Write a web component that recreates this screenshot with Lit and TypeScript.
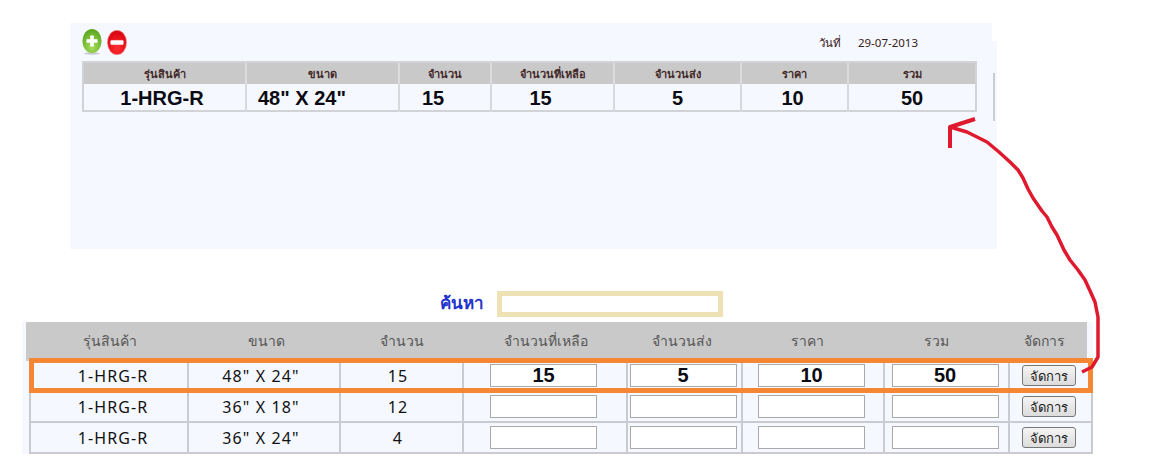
import { LitElement, html, css, svg } from "lit";
import { customElement } from "lit/decorators.js";

const TOP_HEAD = ["รุ่นสินค้า", "ขนาด", "จำนวน", "จำนวนที่เหลือ", "จำนวนส่ง", "ราคา", "รวม"];
const TOP_ROW = ["1-HRG-R", `48" X 24"`, "15", "15", "5", "10", "50"];
const LOW_HEAD = [...TOP_HEAD, "จัดการ"];
const ROWS = [
  { id: "1-HRG-R", size: `48" X 24"`, qty: "15", vals: ["15", "5", "10", "50"] },
  { id: "1-HRG-R", size: `36" X 18"`, qty: "12", vals: ["", "", "", ""] },
  { id: "1-HRG-R", size: `36" X 24"`, qty: "4", vals: ["", "", "", ""] },
];

@customElement("app-root")
export class AppRoot extends LitElement {
  static styles = css`
    :host { display: block; position: relative; width: 1174px; height: 476px; background: #fff; overflow: hidden;
      font-family: Tahoma, "Noto Sans", "DejaVu Sans", sans-serif; }
    .panel { position: relative; box-sizing: border-box; width: 927px; height: 226px; margin: 23px 0 0 70px;
      padding: 6px 20px 0 12px; background: #f5f8fe; }
    .panel::before { content: ""; position: absolute; right: 0; top: 0; width: 5px; height: 18px; background: #fff; }
    .panel::after { content: ""; position: absolute; left: 923px; top: 50px; width: 2px; height: 48px; background: #c9ccd2; }
    .tools { display: flex; height: 32px; align-items: flex-start; }
    .tools svg { display: block; margin-right: 5px; }
    .date { margin-left: auto; margin-top: 6px; display: flex; gap: 17px; padding-right: 59px; font-size: 11.5px; line-height: 16px; color: #3a2020; }
    .ttable { width: 895px; border: 2px solid #d2d3d6; box-sizing: border-box; }
    .thead, .trow { display: grid; grid-template-columns: 161px 153px 92px 123px 127px 107px 128px; }
    .thead { background: #c9c9c9; height: 21px; }
    .thead div { font-size: 11px; line-height: 21px; text-align: center; color: #43292a; font-weight: 700; border-left: 2px solid #dcdcde; }
    .thead div:first-child, .trow div:first-child { border-left: 0; }
    .trow { height: 26px; }
    .trow div { font: 700 20px/28px "Liberation Sans", Arial, sans-serif; color: #0b0b14; text-align: center; border-left: 2px solid #d8d9dc; }
    .trow div:first-child { padding-right: 5px; }
    .trow div:nth-child(6) { padding-right: 4px; }
    .trow .l { text-align: left; padding-left: 11px; }
    .trow .m { padding-right: 24px; }
    .search { display: flex; align-items: center; height: 26px; margin: 42px 0 5px 440px; }
    .search label { font-size: 17px; font-weight: 700; color: #2233cc; width: 57px; padding-bottom: 3px; }
    .search input { box-sizing: border-box; width: 226px; height: 26px; border: 5px solid #eee2b4; background: #fff; outline: 0; }
    .low { box-sizing: border-box; width: 1071px; margin-left: 22px; background: #f5f8fe; height: 132px; padding-left: 4px; }
    .lhead { display: grid; grid-template-columns: 168px 144px 128px 160px 112px 138px 120px 91px; width: 1061px; height: 39px; background: #c9c9c9; }
    .lhead div { font-size: 14px; line-height: 38px; color: #555; text-align: center; }
    .lhead div:last-child { padding-left: 5px; }
    .lrow { display: grid; grid-template-columns: 156px 152px 123px 164px 115px 142px 125px 85px; width: 1064px; height: 31px; margin-left: 3px;
      box-sizing: border-box; border-left: 2px solid #c9cbd0; border-right: 2px solid #c9cbd0; border-bottom: 2px solid #c9cbd0; }
    .lrow > div { display: flex; align-items: center; justify-content: center; border-left: 2px solid #c9cbd0; font-size: 16px; letter-spacing: 1.1px; color: #111; }
    .lrow > div:first-child { border-left: 0; padding-left: 8px; }
    .lrow > div:nth-child(2) { padding-right: 6px; }
    .lrow > div:nth-child(3) { padding-right: 7px; }
    .lrow > div:nth-child(n+4):nth-child(-n+7) { padding-right: 3px; }
    .lrow input { box-sizing: border-box; width: 107px; height: 23px; padding: 0; border: 1px solid #a9a9a9; background: #fff; text-align: center;
      font: 700 20px "Liberation Sans", Arial, sans-serif; color: #0b0b14; outline: 0; }
    .lrow button { box-sizing: border-box; width: 54px; height: 21px; padding: 0; margin-right: 5px; border: 1px solid #777; border-radius: 3px;
      background: linear-gradient(#f4f4f4, #dcdcdc); font-size: 13px; letter-spacing: 0; color: #222; font-family: inherit; }
    .hl { position: absolute; left: 29px; top: 358px; width: 1064px; height: 35px; box-sizing: border-box; border: 5px solid #f58634; pointer-events: none; }
    .arrow { position: absolute; left: 0; top: 0; pointer-events: none; }
  `;

  private plus() {
    return svg`<svg width="20" height="26" viewBox="0 0 20 26">
      <defs><radialGradient id="g" cx=".5" cy=".75" r=".7"><stop offset="0" stop-color="#a8dc5a"/><stop offset="1" stop-color="#5da821"/></radialGradient></defs>
      <ellipse cx="10" cy="24.5" rx="8" ry="1.2" fill="#c8c8c8"/>
      <ellipse cx="10" cy="12" rx="9.6" ry="12" fill="url(#g)"/>
      <path d="M10 6.5v11M4.5 12h11" stroke="#fff" stroke-width="3.6" fill="none"/></svg>`;
  }
  private minus() {
    return svg`<svg width="20" height="26" viewBox="0 0 20 26" style="margin-top:1px">
      <defs><radialGradient id="r" cx=".5" cy=".7" r=".7"><stop offset="0" stop-color="#ff3030"/><stop offset="1" stop-color="#d80010"/></radialGradient></defs>
      <ellipse cx="10" cy="12.5" rx="9.6" ry="12.2" fill="url(#r)" stroke="#f0a0a0" stroke-width=".6"/>
      <rect x="3.5" y="10.3" width="13" height="4.4" rx="1" fill="#fff"/></svg>`;
  }

  render() {
    return html`
      <section class="panel">
        <div class="tools">
          ${this.plus()}${this.minus()}
          <div class="date"><span>วันที่</span><span>29-07-2013</span></div>
        </div>
        <div class="ttable">
          <div class="thead">${TOP_HEAD.map((h) => html`<div>${h}</div>`)}</div>
          <div class="trow">
            ${TOP_ROW.map((c, i) => html`<div class=${i === 1 ? "l" : i === 2 || i === 3 ? "m" : ""}>${c}</div>`)}
          </div>
        </div>
      </section>
      <div class="search"><label>ค้นหา</label><input type="text" /></div>
      <section class="low">
        <div class="lhead">${LOW_HEAD.map((h) => html`<div>${h}</div>`)}</div>
        ${ROWS.map((r) => html`<div class="lrow">
          <div>${r.id}</div><div>${r.size}</div><div>${r.qty}</div>
          ${r.vals.map((v) => html`<div><input type="text" .value=${v} /></div>`)}
          <div><button>จัดการ</button></div>
        </div>`)}
      </section>
      <div class="hl"></div>
      ${svg`<svg class="arrow" width="1174" height="476" viewBox="0 0 1174 476" fill="none" stroke="#e01a2e" stroke-width="3.5" stroke-linejoin="round">
        <path d="M950 127L967 132L987 142L999 152L1010 162L1018 170L1023 178L1028 189L1033 198L1042 211L1047 217L1052 227L1057 235L1064 250L1070 260L1078 270L1085 280L1091 293L1095 302L1098 317L1098 357L1092 367L1082 372"/>
        <path d="M975 119L950 127L950 148" stroke-width="4"/>
      </svg>`}
    `;
  }
}
